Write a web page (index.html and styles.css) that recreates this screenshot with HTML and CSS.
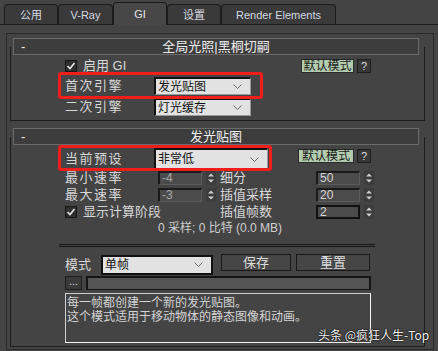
FILE: index.html
```html
<!doctype html>
<html lang="zh-CN">
    <head>
        <meta charset="utf-8">
        <title>V-Ray GI</title>
        <meta name="viewport" content="width=device-width, initial-scale=1">
        <link rel="stylesheet" href="styles.css">
    </head>
    <body>
        <div class="tabs">
            <div class="tab w54">公用</div>
            <div class="tab w55">V-Ray</div>
            <div class="tab w54 on">GI</div>
            <div class="tab w54">设置</div>
            <div class="tab w115">Render Elements</div>
        </div>

        <div class="panel">
            <!-- rollout: global illumination -->
            <div class="roll">
                <div class="rh"><span class="minus">-</span><b>全局光照|黑桐切嗣</b><span></span></div>
                <div class="rb">
                    <div class="row h14">
                        <label class="chk">
                            <svg width="12" height="12" viewBox="0 0 12 12"><rect x="0.5" y="0.5" width="11" height="11" fill="#2f2f2f" stroke="#161616"/><polyline points="2.5,6 5,8.5 9.5,3" fill="none" stroke="#e6e6e6" stroke-width="1.6"/></svg>
                            <span>启用 GI</span>
                        </label>
                        <div class="btns"><span class="def">默认模式</span><span class="q">?</span></div>
                    </div>
                    <div class="row h18 mt4">
                        <span class="lbl wide">首次引擎</span>
                        <div class="dd w97"><span>发光贴图</span><svg width="9" height="5" viewBox="0 0 9 5"><polyline points="0.5,0.5 4.5,4.5 8.5,0.5" fill="none" stroke="#6a6a6a"/></svg></div>
                    </div>
                    <div class="row h18 mt3">
                        <span class="lbl wide">二次引擎</span>
                        <div class="dd w97"><span>灯光缓存</span><svg width="9" height="5" viewBox="0 0 9 5"><polyline points="0.5,0.5 4.5,4.5 8.5,0.5" fill="none" stroke="#6a6a6a"/></svg></div>
                    </div>
                    <div class="mark m1"></div>
                </div>
            </div>

            <!-- rollout: irradiance map -->
            <div class="roll mt7">
                <div class="rh"><span class="minus">-</span><b>发光贴图</b><span></span></div>
                <div class="rb rb2">
                    <div class="row h21">
                        <span class="lbl wide">当前预设</span>
                        <div class="dd w114 h21"><span>非常低</span><svg width="9" height="5" viewBox="0 0 9 5"><polyline points="0.5,0.5 4.5,4.5 8.5,0.5" fill="none" stroke="#6a6a6a"/></svg></div>
                        <div class="btns top1"><span class="def w56">默认模式</span><span class="q">?</span></div>
                    </div>

                    <div class="spins">
                        <span class="lbl wide">最小速率</span>
                        <span class="sp">-4</span>
                        <span class="arr"><svg width="10" height="14" viewBox="0 0 10 14"><polygon points="5,2.5 8,5.5 2,5.5" fill="#cfcfcf"/><polygon points="2,8.5 8,8.5 5,11.5" fill="#cfcfcf"/></svg></span>
                        <span class="lbl">细分</span>
                        <span class="sp lt">50</span>
                        <span class="arr"><svg width="10" height="14" viewBox="0 0 10 14"><polygon points="5,2.5 8,5.5 2,5.5" fill="#cfcfcf"/><polygon points="2,8.5 8,8.5 5,11.5" fill="#cfcfcf"/></svg></span>

                        <span class="lbl wide">最大速率</span>
                        <span class="sp">-3</span>
                        <span class="arr"><svg width="10" height="14" viewBox="0 0 10 14"><polygon points="5,2.5 8,5.5 2,5.5" fill="#cfcfcf"/><polygon points="2,8.5 8,8.5 5,11.5" fill="#cfcfcf"/></svg></span>
                        <span class="lbl">插值采样</span>
                        <span class="sp lt">20</span>
                        <span class="arr"><svg width="10" height="14" viewBox="0 0 10 14"><polygon points="5,2.5 8,5.5 2,5.5" fill="#cfcfcf"/><polygon points="2,8.5 8,8.5 5,11.5" fill="#cfcfcf"/></svg></span>

                        <label class="chk span3">
                            <svg width="12" height="12" viewBox="0 0 12 12"><rect x="0.5" y="0.5" width="11" height="11" fill="#2f2f2f" stroke="#161616"/><polyline points="2.5,6 5,8.5 9.5,3" fill="none" stroke="#e6e6e6" stroke-width="1.6"/></svg>
                            <span>显示计算阶段</span>
                        </label>
                        <span class="lbl">插值帧数</span>
                        <span class="sp lt focus">2</span>
                        <span class="arr"><svg width="10" height="14" viewBox="0 0 10 14"><polygon points="5,2.5 8,5.5 2,5.5" fill="#cfcfcf"/><polygon points="2,8.5 8,8.5 5,11.5" fill="#cfcfcf"/></svg></span>
                    </div>

                    <div class="stat">0 采样; 0 比特 (0.0 MB)</div>

                    <div class="sep"></div>

                    <div class="row h21 mt7">
                        <span class="lbl w36">模式</span>
                        <div class="dd w112 h20 thick"><span>单帧</span><svg width="9" height="5" viewBox="0 0 9 5"><polyline points="0.5,0.5 4.5,4.5 8.5,0.5" fill="none" stroke="#6a6a6a"/></svg></div>
                        <span class="btn w70 ml8">保存</span>
                        <span class="btn w74 ml5">重置</span>
                    </div>
                    <div class="row h14 mt1">
                        <span class="dots">...</span>
                        <span class="path"></span>
                    </div>
                    <div class="memo">
                        <div>每一帧都创建一个新的发光贴图。</div>
                        <div>这个模式适用于移动物体的静态图像和动画。</div>
                    </div>

                    <div class="mark m2"></div>
                </div>
            </div>
        </div>

        <div class="wm">头条 @疯狂人生-Top</div>
    </body>
</html>
```

FILE: styles.css
```css
/* common */
html, body { margin: 0; }
body {
    width: 438px; height: 351px; overflow: hidden; position: relative;
    background: #444;
    color: #d8d8d8;
    font-family: "Liberation Sans", "Noto Sans CJK SC", sans-serif;
    font-size: 12px; line-height: 14px;
}
b { font-weight: normal; }
svg { display: block; }

/* tabs */
.tabs {
    height: 25px; box-sizing: border-box;
    display: flex; align-items: flex-end;
    padding-left: 4px;
    border-bottom: 1px solid #1c1c1c;
}
.tab {
    height: 20px; box-sizing: border-box;
    display: flex; justify-content: center; align-items: center;
    background: #3a3a3a; color: #d4d8e0;
    border: 1px solid #1c1c1c; border-bottom: 0;
    border-radius: 4px 4px 0 0;
    font-size: 11px;
}
.tab.on { height: 23px; margin-bottom: -1px; background: #474747; color: #e6e6e6; padding-bottom: 1px; }
.w54 { width: 54px; } .w55 { width: 55px; } .w115 { width: 115px; }

/* panel & rollouts */
.panel {
    margin: 8px 0 0 6px; width: 428px; box-sizing: border-box;
    border: 1px solid #2a2a2a;
    padding: 4px 8px 2px 3px;
}
.mt7 { margin-top: 7px; }
.rh {
    margin: 0 6px 0 3px; height: 17px; box-sizing: border-box;
    border: 1px solid #6b6b6b; background: #3d3d3d;
    display: grid; grid-template-columns: 1fr auto 1fr; align-items: center;
    color: #eee; font-size: 13px; line-height: 15px;
    position: relative; z-index: 1;
}
.rh .minus { padding-left: 7px; }
.rb {
    margin-top: -8px; position: relative;
    border: 1px solid #1c1c1c; border-top: 0;
    padding: 12px 53px 4px 54px;
}
.rb2 { padding-top: 11px; padding-bottom: 3px; }

/* rows */
.row { display: flex; align-items: center; }
.h14 { height: 14px; } .h18 { height: 18px; } .h21 { height: 21px; }
.mt1 { margin-top: 1px; } .mt3 { margin-top: 3px; } .mt4 { margin-top: 4px; }
.ml5 { margin-left: 5px; } .ml8 { margin-left: 8px; }
.lbl { display: block; white-space: nowrap; }
.lbl.wide { width: 89px; letter-spacing: 1.5px; font-size: 13px; }
.w36 { width: 36px; font-size: 13px; }

.chk { display: flex; align-items: center; gap: 6px; }
.chk span { font-size: 13px; }

.btns { margin-left: auto; display: flex; gap: 3px; }
.btns.top1 { align-self: flex-start; margin-top: 1px; }
.def {
    width: 53px; height: 14px; box-sizing: border-box;
    background: #b3ccae; color: #1a1a1a; border: 1px solid #2a2a2a;
    font-size: 12px; line-height: 12px; text-align: center;
}
.def.w56 { width: 56px; }
.q {
    width: 14px; height: 14px; box-sizing: border-box;
    background: #393939; border: 1px solid #1e1e1e; color: #ddd;
    font-size: 11px; line-height: 12px; text-align: center;
}

/* dropdowns */
.dd {
    height: 18px; box-sizing: border-box;
    display: flex; align-items: center; justify-content: space-between;
    background: #e2e2e2; color: #111;
    border-top: 2px solid #111; border-left: 2px solid #111;
    border-right: 1px solid #999; border-bottom: 1px solid #999;
    padding: 0 8px 0 2px;
    font-size: 12px;
}
.dd.h21 { height: 21px; }
.dd.h20 { height: 20px; }
.dd.thick { border: 2px solid #111; }
.w97 { width: 97px; } .w112 { width: 112px; } .w114 { width: 114px; }

/* spinners */
.spins {
    display: grid;
    grid-template-columns: 89px 44px 10px 92px 44px 10px;
    column-gap: 4px; row-gap: 3px;
    margin-top: 2px;
    align-items: center;
}
.spins .lbl:not(.wide) { width: 88px; font-size: 13px; }
.span3 { grid-column: span 3; }
.sp {
    height: 14px; box-sizing: border-box;
    background: #4b4b4b; color: #a8a8a8;
    border-top: 2px solid #1a1a1a; border-left: 2px solid #1a1a1a;
    border-right: 1px solid #5c5c5c; border-bottom: 1px solid #5c5c5c;
    padding-left: 2px; font-size: 12px; line-height: 11px;
}
.sp.lt { color: #d8d8d8; }
.sp.focus { border: 2px solid #111; }
.arr { background: #3c3c3c; }

.stat { margin: 3px 0 0 93px; height: 13px; line-height: 13px; color: #cfcfcf; }

.sep {
    margin: 9px -4px 0 -6px; height: 3px; box-sizing: border-box;
    border-top: 1px solid #151515; border-bottom: 1px solid #151515;
}

.btn {
    height: 17px; box-sizing: border-box; align-self: flex-start;
    border: 1px solid #181818; background: #464646; color: #ddd;
    font-size: 13px; line-height: 15px; text-align: center;
}
.w70 { width: 70px; } .w74 { width: 74px; }

.dots {
    width: 17px; height: 14px; box-sizing: border-box;
    background: #3a3a3a; border: 1px solid #1e1e1e; color: #ddd;
    font-size: 11px; line-height: 8px; text-align: center;
}
.path {
    flex: 1; margin-left: 4px; height: 14px; box-sizing: border-box;
    background: #555; border: 2px solid #151515; border-bottom-width: 1px;
}
.memo {
    margin-top: 3px; height: 50px; box-sizing: border-box;
    border: 1px solid #cfcfcf; border-right-color: #f4f4f4; border-bottom-color: #f4f4f4;
    padding: 1px 0 0 1px;
    color: #d4d4d4; font-size: 12px; line-height: 14px;
    font-family: "Noto Sans CJK SC", sans-serif;
}

/* annotations over the dialog */
.mark {
    position: absolute; box-sizing: border-box;
    border: 3px solid #f01e1a; border-radius: 3px;
}
.m1 { left: 47px; top: 25px; width: 205px; height: 27px; }
.m2 { left: 47px; top: 8px; width: 214px; height: 26px; }

.wm {
    position: absolute; left: 318px; top: 327px;
    white-space: nowrap;
    color: #f2f2f2; font-size: 12px; line-height: 15px;
    text-shadow: 0 0 2px #000, 0 0 1px #000;
    font-family: "Noto Sans CJK SC", sans-serif;
}
```
